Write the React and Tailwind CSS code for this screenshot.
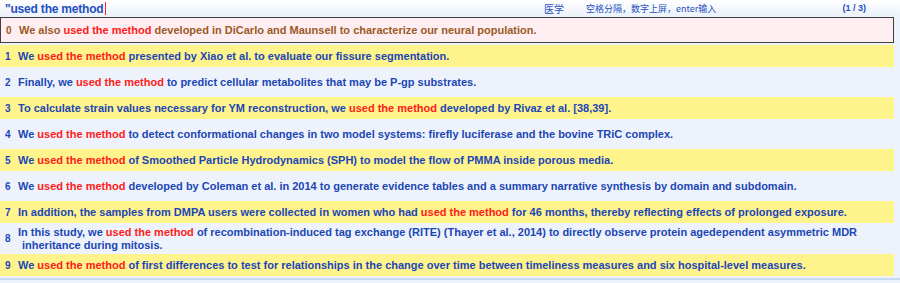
import React from 'react';

const rows = [
  { pre: 'We also ', post: ' developed in DiCarlo and Maunsell to characterize our neural population.' },
  { pre: 'We ', post: ' presented by Xiao et al. to evaluate our fissure segmentation.' },
  { pre: 'Finally, we ', post: ' to predict cellular metabolites that may be P-gp substrates.' },
  { pre: 'To calculate strain values necessary for YM reconstruction, we ', post: ' developed by Rivaz et al. [38,39].' },
  { pre: 'We ', post: ' to detect conformational changes in two model systems: firefly luciferase and the bovine TRiC complex.' },
  { pre: 'We ', post: ' of Smoothed Particle Hydrodynamics (SPH) to model the flow of PMMA inside porous media.' },
  { pre: 'We ', post: ' developed by Coleman et al. in 2014 to generate evidence tables and a summary narrative synthesis by domain and subdomain.' },
  { pre: 'In addition, the samples from DMPA users were collected in women who had ', post: ' for 46 months, thereby reflecting effects of prolonged exposure.' },
  {
    pre: 'In this study, we ',
    post: ' of recombination-induced tag exchange (RITE) (Thayer et al., 2014) to directly observe protein agedependent asymmetric MDR',
    more: 'inheritance during mitosis.',
  },
  { pre: 'We ', post: ' of first differences to test for relationships in the change over time between timeliness measures and six hospital-level measures.' },
];

const Hit = () => <span className="text-[#ff1a1a]">used the method</span>;

const App = () => {
  return (
    <div className="w-[900px] h-[283px] bg-[#eef3fb] overflow-hidden font-['Liberation_Sans',Arial,'Noto_Sans_CJK_SC',sans-serif]">
      {/* Header */}
      <div className="h-[17px] flex items-center bg-gradient-to-b from-white to-[#eaf1fa] text-[#1f4fbf]">
        <div className="pl-[5px] w-[540px] flex items-center text-[12px] font-bold leading-none tracking-[-0.2px]">
          <span>"used the method</span>
          <span className="ml-[1px] w-[1px] h-[13px] bg-[#ff2020]"></span>
        </div>
        <span className="ml-[4px] text-[10px] font-['Noto_Sans_CJK_SC',sans-serif]">医学</span>
        <span className="ml-[22px] text-[9px] font-['Noto_Sans_CJK_SC',sans-serif]">空格分隔，数字上屏，enter输入</span>
        <span className="ml-auto mr-[34px] text-[9px] font-bold">(1 / 3)</span>
      </div>

      {/* Candidate list */}
      <div className="w-[894px]">
        {rows.map((r, i) => {
          const selected = i === 0;
          const odd = i % 2 === 1;
          return (
            <div key={i} className={r.more ? 'h-[27px] py-[1px]' : selected ? 'h-[26px]' : 'h-[26px] py-[2px]'}>
              <div
                className={`h-full flex items-center font-bold text-[11px] ${
                  selected
                    ? 'bg-[#ffeef1] border border-[#3f3f3f] text-[#9a5a26]'
                    : odd
                    ? 'bg-[#fff38c] text-[#1b46b6]'
                    : 'text-[#1b46b6]'
                }`}
              >
                <span className={`w-[18px] shrink-0 pl-[5px] text-[10px] ${selected ? 'text-[#9a5a26]' : 'text-[#1b46b6]'}`}>{i}</span>
                {r.more ? (
                  <div className="flex flex-col leading-[13px] whitespace-nowrap">
                    <span>
                      {r.pre}
                      <Hit />
                      {r.post}
                    </span>
                    <span className="pl-[4px]">{r.more}</span>
                  </div>
                ) : (
                  <span className="leading-none whitespace-nowrap">
                    {r.pre}
                    <Hit />
                    {r.post}
                  </span>
                )}
              </div>
            </div>
          );
        })}
      </div>
      <div className="h-[2px] bg-[#c9d9ef]"></div>
    </div>
  );
};

export default App;
